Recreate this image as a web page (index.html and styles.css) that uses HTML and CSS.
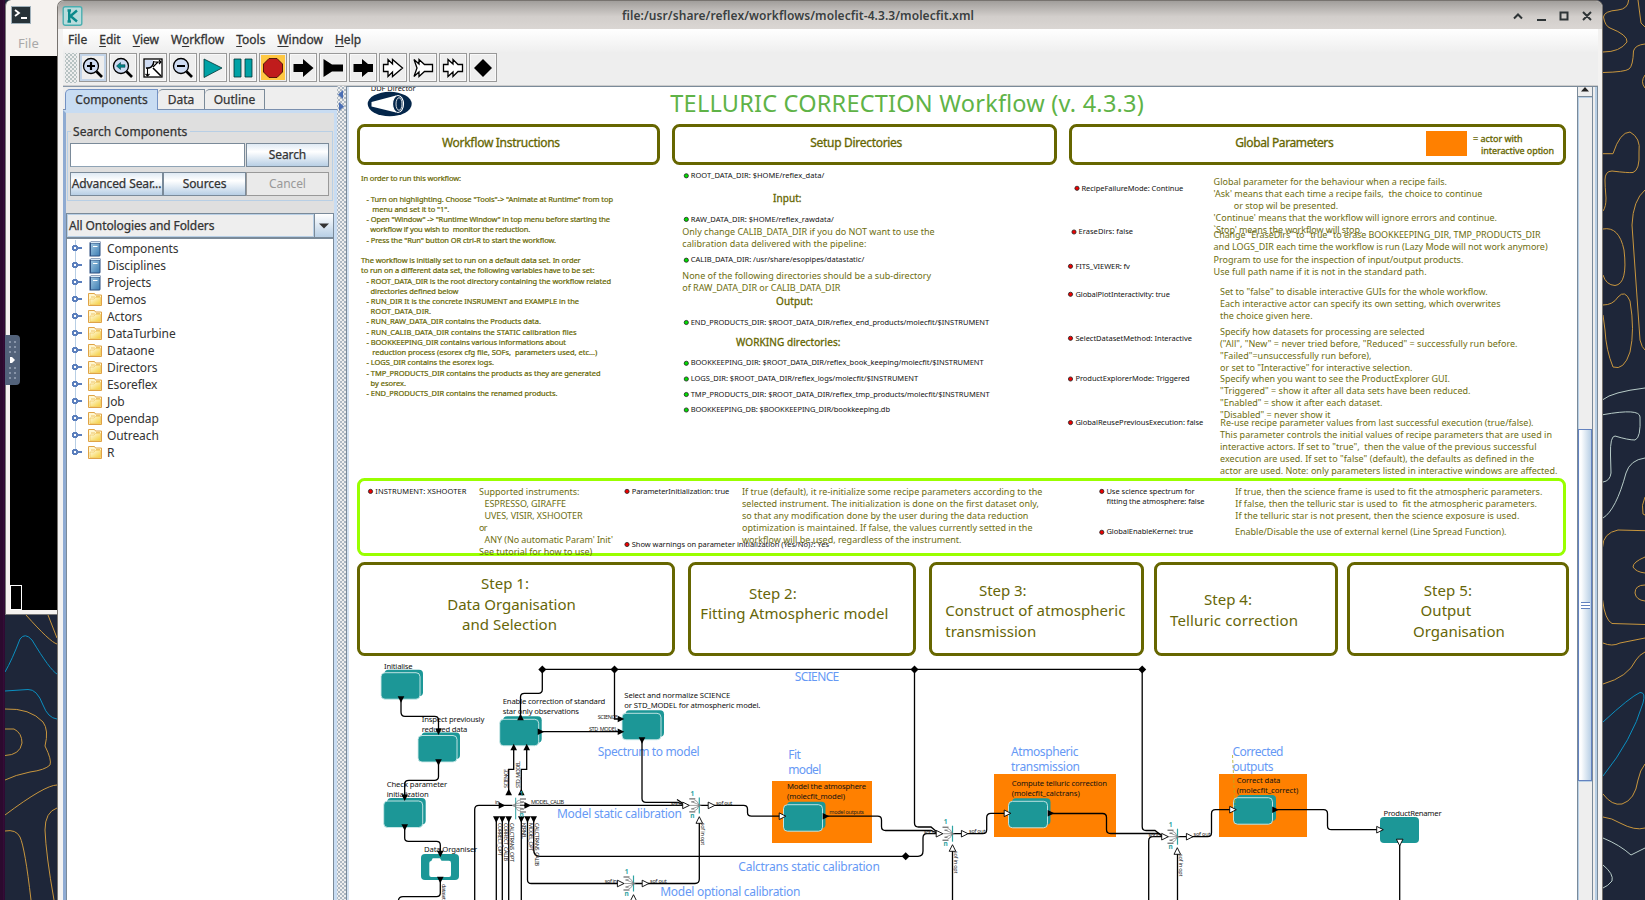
FILE: index.html
```
<!DOCTYPE html>
<html lang="en">
<head>
<meta charset="utf-8">
<title>molecfit.xml</title>
<link rel="stylesheet" href="styles.css">
</head>
<body>
<svg class="defs" width="0" height="0">
  <defs>
    <linearGradient id="bk" x1="0" y1="0" x2="1" y2="1"><stop offset="0" stop-color="#9cc4e0"/><stop offset="1" stop-color="#3f7fb4"/></linearGradient>
    <linearGradient id="fo" x1="0" y1="0" x2="1" y2="1"><stop offset="0" stop-color="#fffbe6"/><stop offset="1" stop-color="#f5cf3c"/></linearGradient>
    <symbol id="book" viewBox="0 0 14 16"><path d="M1.5 1.5L3 .5H12.5V14.5L11.5 15.5H1.5Z" fill="#2c4f80"/><rect x="3" y="2.5" width="8.5" height="12" fill="url(#bk)"/><path d="M2.5 1.5H12" stroke="#dbe9f5"/><path d="M5 5.5H9.500" stroke="#fff"/></symbol>
    <symbol id="folder" viewBox="0 0 14 13"><path d="M.5 12.500V.5H6.500L7.500 2H13.500V12.500Z" fill="#fff6cf" stroke="#dfa347"/><path d="M2 11.500V6H6L7.500 4.500H12.500V11.500Z" fill="url(#fo)" stroke="#eec14a" stroke-width=".6"/><path d="M3 4H7M8 3.500H12" stroke="#e8b84a" stroke-width=".8"/></symbol>
    <symbol id="lens" viewBox="0 0 24 24"><circle cx="10" cy="10" r="7.500" fill="#cfdcf3" stroke="#000" stroke-width="1.300"/><path d="M15.500 15.500L21 21" stroke="#000" stroke-width="2.600"/></symbol>
    <g id="tri"><path d="M-3.300 -3.300L3.300 0L-3.300 3.300Z"/></g>
    <g id="dia"><path d="M-4 0L0 -4L4 0L0 4Z"/></g>
    <g id="actor"><rect x="3.500" y="-3" width="38.500" height="26.500" rx="4"/><rect x="0" y="0" width="39" height="26.500" rx="4" stroke="#cfeaea" stroke-width=".9"/></g>
    <g id="merge">
      <path d="M0 -8V8" stroke="#2ea3a3" stroke-width="1.200"/>
      <path d="M-10 -6.500H-4M-10 6.500H-4M-8 -3.500H-5M-8 3.500H-5" stroke="#333" stroke-width=".9"/>
      <path d="M-5 -5.500Q-2 -5 0 0Q-2 5 -5 5.500M-6 -3Q-3 -2 1 0Q-3 2 -6 3M-10 0H2" stroke="#777" stroke-width=".7" fill="none"/>
      <text class="port" x="-7" y="-9.500">1</text><text class="port" x="-7" y="12.500">n</text>
    </g>
  </defs>
</svg>

<svg class="wallpaper" viewBox="0 0 1645 900">
  <g class="gold">
    <path d="M1628.700 0Q1628 9 1618 10Q1604 11 1603.500 17Q1605 26 1610 28Q1628 35 1627 42Q1620 52 1603 52M1603 72.500Q1625 72 1629 69Q1633 66 1633.500 51Q1635 45 1645 44M1638 0L1641 23L1645 27M1645 75Q1640 82 1645 88"/>
    <path d="M1603 153.700H1613Q1620 132 1630 132Q1641 138 1639 152Q1640 170 1633 172.500Q1628 173 1612 171Q1605 171 1605 180Q1605 186 1606 198Q1606 207 1603 211M1645 190Q1633 200 1632 225L1640 340Q1642 348 1645 350M1603 229Q1619 226 1624 250Q1628 284 1615 285.500Q1606 285 1603 275M1603 305Q1613 305 1618 297Q1625 289 1630 301Q1635 330 1630 352Q1624 371 1613 367Q1606 350 1605 330L1603 315"/>
    <path d="M1645 497Q1641 505 1643 514L1645 515M1645 530.700L1618 530Q1603 533 1602.600 547M1602.600 600Q1605 620 1612 623.500L1645 624.500M1645 557Q1633 562 1633 567Q1636 572 1645 573M1645 585Q1635 585 1635 593Q1636 600 1645 601M1603 643Q1612 647 1620 643L1645 638M1603 684Q1628 677 1636 660Q1639 655 1645 652M1603 794Q1612 806 1622 804Q1635 800 1638 780Q1640 770 1645 764M1603 817Q1612 818 1620 823Q1635 831 1645 828"/>
    <path d="M26 615Q50 642 57 644M48 615L57 638M5 709Q30 708 43 722Q49 730 45 746Q52 760 50 765Q45 770 30 772Q15 775 5 780M5 729H14Q22 733 22 743Q20 755 5 755.500M5 815Q45 785 57 785M5 831Q16 829 20 837Q25 848 31 900M57 808Q45 812 45 830Q46 855 54 900"/>
  </g>
  <path class="cyan" d="M1603 722Q1630 697 1640 692.500Q1646 692 1643 703Q1632 740 1603 776M5 672Q12 660 20 639Q25 632 32 640Q50 670 57 674M5 691L28 689.500Q37 689 43 705Q48 718 57 719"/>
  <path class="pale" d="M1603 399.600Q1612 392 1645 388M1603 414.700Q1640 408 1640 417Q1641 438 1635 440Q1628 440 1615 436Q1610 436 1610.500 455L1611 473Q1610 481 1603 482M1645 458Q1630 460 1626 473Q1616 510 1603 518M1603 838Q1620 845 1631 855L1645 848M1603 865Q1614 874 1612 881Q1608 886 1603 888"/>
</svg>
<div class="dock"></div>

<div class="terminal">
  <svg class="term-icon" viewBox="0 0 20 18"><rect x=".5" y=".5" width="19" height="17" fill="#263238" stroke="#9fb0ba"/><path d="M4 4L8 7L4 10M10 12H16" fill="none" stroke="#fff" stroke-width="1.800"/></svg>
  <div class="term-menu">File</div>
  <div class="term-screen"><div class="cursor"></div></div>
</div>
<div class="handle"><svg width="15" height="50"><path d="M4 7h9M4 12h9M4 17h9M4 33h9M4 38h9M4 43h9" stroke="#8794a8" stroke-width="2" stroke-dasharray="2 3"/><path d="M5 22V28H7L10 25L7 22Z" fill="#fff"/></svg></div>

<div class="window">
  <div class="titlebar">
    <svg class="k-icon" viewBox="0 0 20 20"><rect x=".7" y=".7" width="18.600" height="18.600" rx="2" fill="#b9dcdc" stroke="#4aaeb0" stroke-width="1.400"/><path d="M5 4.500H8.500M6.700 4.500V15.500M5 15.500H8.500M14.500 4.500L8 10L14.500 15.500" fill="none" stroke="#0c8a8c" stroke-width="2.400"/></svg>
    <span class="title">file:/usr/share/reflex/workflows/molecfit-4.3.3/molecfit.xml</span>
    <svg class="wm" viewBox="0 0 80 10"><g fill="none" stroke="#2e3436" stroke-width="2"><path d="M1 7.500L5 3.500L9 7.500M24 9H33M47.500 1.500H54.500V8.500H47.500ZM70 1L78 9M78 1L70 9"/></g></svg>
  </div>
  <div class="body">
    <div class="menubar"><span>File</span><span><u>E</u>dit</span><span><u>V</u>iew</span><span>W<u>o</u>rkflow</span><span><u>T</u>ools</span><span><u>W</u>indow</span><span><u>H</u>elp</span></div>
    <div class="toolbar">
      <i class="grip"></i>
      <b class="on"><svg viewBox="0 0 24 24"><use href="#lens"/><path d="M6 10H14M10 6V14" stroke="#000" stroke-width="2.200"/></svg></b>
      <b><svg viewBox="0 0 24 24"><use href="#lens"/><path d="M5.500 10L9.500 6.500V8.700H14V11.300H9.500V13.500Z" fill="#00858a" stroke="#033" stroke-width=".5"/></svg></b>
      <b><svg viewBox="0 0 24 24"><rect x="3" y="3" width="18" height="18" fill="#fff" stroke="#000" stroke-width="1.300"/><path d="M4 4H12V8Q12 12 8 12H4Z" fill="#cfdcf3"/><path d="M5 12Q12 13 13 5M12 12L20 20" stroke="#000" stroke-width="1.600" fill="none"/><path d="M12 11L17 6M14 6H20M18 4L20 6L18 8M6.500 13V20M4.500 18L6.500 20L8.500 18" fill="none" stroke="#000" stroke-width="1.100"/></svg></b>
      <b><svg viewBox="0 0 24 24"><use href="#lens"/><path d="M6 10H14" stroke="#000" stroke-width="2.200"/></svg></b>
      <b><svg viewBox="0 0 24 24"><path d="M3 3L21 12L3 21.500Z" fill="#00a2a6" stroke="#033" stroke-width=".8"/></svg></b>
      <b><svg viewBox="0 0 24 24"><path d="M3 3H10V21H3ZM14 3H21V21H14Z" fill="#00a2a6" stroke="#033" stroke-width=".8"/></svg></b>
      <b class="stop"><svg viewBox="0 0 24 24"><path d="M8 2.500H16L21.500 8V16L16 21.500H8L2.500 16V8Z" fill="#c01c1c" stroke="#300" stroke-width=".8"/></svg></b>
      <b><svg viewBox="0 0 24 24"><path d="M2.500 8H12V3L22.500 12L12 21V16H2.500Z"/></svg></b>
      <b><svg viewBox="0 0 24 24"><path d="M2.500 3L11 8.500H22V15.500H11L2.500 21Z"/></svg></b>
      <b><svg viewBox="0 0 24 24"><path d="M2.500 8H11V3L17 8H22V16H17L11 21V16H2.500Z"/></svg></b>
      <b><svg viewBox="0 0 24 24"><path class="hollow" d="M2.500 8.500H7V3.500L11.500 8V3.500L21.500 12L11.500 20.500V16L7 20.500V15.500H2.500Z"/></svg></b>
      <b><svg viewBox="0 0 24 24"><path class="hollow" d="M3 3.500L8 8V3.500L13.500 8.500H21.500V15.500H13.500L8 20.500V16L3 20.500L6 12Z"/></svg></b>
      <b><svg viewBox="0 0 24 24"><path class="hollow" d="M2.500 8.500H7V3.500L12 8V3.500L17 8.500H21.500V15.500H17L12 20.500V16L7 20.500V15.500H2.500Z"/></svg></b>
      <b><svg viewBox="0 0 24 24"><path d="M12 3L21 12L12 21L3 12Z"/></svg></b>
    </div>
    <div class="split">
      <div class="side">
        <div class="tabs"><span class="tab sel">Components</span><span class="tab data">Data</span><span class="tab out">Outline</span></div>
        <div class="panel">
          <div class="search">
            <div class="legend"><span>Search Components</span></div>
            <div class="row"><div class="input"></div><div class="btn">Search</div></div>
            <div class="row three"><div class="btn adv">Advanced Sear...</div><div class="btn">Sources</div><div class="btn off">Cancel</div></div>
          </div>
          <div class="combo"><span>All Ontologies and Folders</span><i><svg width="12" height="6"><path d="M1 .5H11L6 5.500Z" fill="#333"/></svg></i></div>
          <div class="tree">
            <div class="node bk"><i></i><svg><use href="#book"/></svg>Components</div>
            <div class="node bk"><i></i><svg><use href="#book"/></svg>Disciplines</div>
            <div class="node bk"><i></i><svg><use href="#book"/></svg>Projects</div>
            <div class="node"><i></i><svg><use href="#folder"/></svg>Demos</div>
            <div class="node"><i></i><svg><use href="#folder"/></svg>Actors</div>
            <div class="node"><i></i><svg><use href="#folder"/></svg>DataTurbine</div>
            <div class="node"><i></i><svg><use href="#folder"/></svg>Dataone</div>
            <div class="node"><i></i><svg><use href="#folder"/></svg>Directors</div>
            <div class="node"><i></i><svg><use href="#folder"/></svg>Esoreflex</div>
            <div class="node"><i></i><svg><use href="#folder"/></svg>Job</div>
            <div class="node"><i></i><svg><use href="#folder"/></svg>Opendap</div>
            <div class="node"><i></i><svg><use href="#folder"/></svg>Outreach</div>
            <div class="node last"><i></i><svg><use href="#folder"/></svg>R</div>
          </div>
        </div>
      </div>
      <div class="divider"><svg width="9" height="32"><path d="M6 4V13L1 8.500ZM2 16V25L7 20.500Z" fill="#4a6fb5"/></svg></div>
      <div class="canvas">
<svg viewBox="349 87 1228 813" width="1228" height="813">
  <text class="p" x="370.700" y="91" textLength="45">DDF Director</text>
  <ellipse cx="389.700" cy="104" rx="22" ry="12.300" fill="#04264a"/>
  <path d="M371.500 102L396 95.500V112.500L371.500 106.500Z" fill="#fff"/><ellipse cx="398" cy="104" rx="5.500" ry="8.500" fill="#04264a" stroke="#fff" stroke-width="1.200"/><ellipse cx="399" cy="104" rx="3" ry="6.300" fill="#04264a" stroke="#fff" stroke-width=".8"/>
  <text class="big" x="670.300" y="112.300" textLength="473.500">TELLURIC CORRECTION Workflow (v. 4.3.3)</text>
  <g class="box">
    <rect x="358.500" y="125.500" width="300" height="38" rx="6"/><rect x="673.500" y="125.500" width="382" height="38" rx="6"/><rect x="1070.500" y="125.500" width="494" height="38" rx="6"/>
    <rect x="358.500" y="563.500" width="315" height="91" rx="6"/><rect x="689.500" y="563.500" width="225" height="91" rx="6"/><rect x="930.500" y="563.500" width="212" height="91" rx="6"/><rect x="1155.500" y="563.500" width="181" height="91" rx="6"/><rect x="1348.500" y="563.500" width="219" height="91" rx="6"/>
  </g>
  <rect x="1426" y="131" width="41" height="25" fill="#ff8000"/>
  <g class="h12"><text x="442" y="146.700" textLength="118">Workflow Instructions</text><text x="810.300" y="146.700" textLength="92">Setup Directories</text><text x="1235.200" y="146.700" textLength="98.500">Global Parameters</text></g>
  <g class="h9"><text x="1473" y="141.700" textLength="49.500">= actor with</text><text x="1481" y="153.700" textLength="73">interactive option</text></g>
  <g class="ins">
    <text x="361" y="181.300" textLength="100">In order to run this workflow:</text>
    <text x="366.500" y="201.700" textLength="246.500">- Turn on highlighting. Choose "Tools"-&gt; "Animate at Runtime" from top</text>
    <text x="372.300" y="212" textLength="77">menu and set it to "1".</text>
    <text x="366.500" y="222.200" textLength="243.500">- Open "Window" -&gt; "Runtime Window" in top menu before starting the</text>
    <text x="370.300" y="232.400" textLength="160">workflow if you wish to&#160; monitor the reduction.</text>
    <text x="366.500" y="242.600" textLength="189.500">- Press the "Run" button OR ctrl-R to start the workflow.</text>
    <text x="361" y="263.100" textLength="219.700">The workflow is initially set to run on a default data set. In order</text>
    <text x="361" y="273.300" textLength="233.500">to run on a different data set, the following variables have to be set:</text>
    <text x="366.500" y="283.500" textLength="244.500">- ROOT_DATA_DIR is the root directory containing the workflow related</text>
    <text x="370.500" y="293.700" textLength="88">directories defined below</text>
    <text x="366.500" y="303.900" textLength="212.500">- RUN_DIR It is the concrete INSRUMENT and EXAMPLE in the</text>
    <text x="370.500" y="314.200" textLength="60.500">ROOT_DATA_DIR.</text>
    <text x="366.500" y="324.400" textLength="174.500">- RUN_RAW_DATA_DIR contains the Products data.</text>
    <text x="366.500" y="334.600" textLength="210">- RUN_CALIB_DATA_DIR contains the STATIC calibration files</text>
    <text x="366.500" y="344.800" textLength="199.500">- BOOKKEEPING_DIR contains various informations about</text>
    <text x="372.300" y="355" textLength="225">reduction process (esorex cfg file, SOFs,&#160; parameters used, etc...)</text>
    <text x="366.500" y="365.300" textLength="127.500">- LOGS_DIR contains the esorex logs.</text>
    <text x="366.500" y="375.500" textLength="234">- TMP_PRODUCTS_DIR contains the products as they are generated</text>
    <text x="370.500" y="385.700" textLength="35.500">by esorex.</text>
    <text x="366.500" y="395.900" textLength="191">- END_PRODUCTS_DIR contains the renamed products.</text>
  </g>
  <g class="gdot"><circle cx="686.300" cy="175.800" r="2.100"/><circle cx="686.300" cy="219.400" r="2.100"/><circle cx="686.300" cy="260.200" r="2.100"/><circle cx="686.300" cy="322.500" r="2.100"/><circle cx="686.300" cy="363.300" r="2.100"/><circle cx="686.300" cy="379" r="2.100"/><circle cx="686.300" cy="394.500" r="2.100"/><circle cx="686.300" cy="410" r="2.100"/></g>
  <g class="p">
    <text x="690.700" y="178" textLength="133.500">ROOT_DATA_DIR: $HOME/reflex_data/</text>
    <text x="690.700" y="221.700" textLength="143">RAW_DATA_DIR: $HOME/reflex_rawdata/</text>
    <text x="690.700" y="262.300" textLength="173.500">CALIB_DATA_DIR: /usr/share/esopipes/datastatic/</text>
    <text x="690.700" y="324.700" textLength="298.500">END_PRODUCTS_DIR: $ROOT_DATA_DIR/reflex_end_products/molecfit/$INSTRUMENT</text>
    <text x="690.700" y="365.300" textLength="293">BOOKKEEPING_DIR: $ROOT_DATA_DIR/reflex_book_keeping/molecfit/$INSTRUMENT</text>
    <text x="690.700" y="381" textLength="227.500">LOGS_DIR: $ROOT_DATA_DIR/reflex_logs/molecfit/$INSTRUMENT</text>
    <text x="690.700" y="396.700" textLength="299">TMP_PRODUCTS_DIR: $ROOT_DATA_DIR/reflex_tmp_products/molecfit/$INSTRUMENT</text>
    <text x="690.700" y="412.300" textLength="199.300">BOOKKEEPING_DB: $BOOKKEEPING_DIR/bookkeeping.db</text>
  </g>
  <g class="h10"><text x="773" y="201.500" textLength="28.500">Input:</text><text x="776" y="304.700" textLength="37">Output:</text><text x="736" y="345.700" textLength="104.500">WORKING directories:</text></g>
  <g class="note">
    <text x="682.300" y="235.300" textLength="252.300">Only change CALIB_DATA_DIR if you do NOT want to use the</text>
    <text x="682.300" y="247.300" textLength="184">calibration data delivered with the pipeline:</text>
    <text x="682.300" y="279" textLength="248.700">None of the following directories should be a sub-directory</text>
    <text x="682.300" y="291" textLength="158">of RAW_DATA_DIR or CALIB_DATA_DIR</text>
    <text x="1213.600" y="185.300" textLength="233.400">Global parameter for the behaviour when a recipe fails.</text>
    <text x="1213.600" y="197.300" textLength="268.700">'Ask' means that each time a recipe fails,&#160; the choice to continue</text>
    <text x="1233.700" y="209.300" textLength="104.500">or stop wil be presented.</text>
    <text x="1213.600" y="221.200" textLength="283.400">'Continue' means that the workflow will ignore errors and continue.</text>
    <text x="1213.600" y="233.200" textLength="148.700">`Stop' means the workflow will stop.</text>
    <text x="1213.600" y="238.300" textLength="327">Change "EraseDirs" to "true" to erase BOOKKEEPING_DIR, TMP_PRODUCTS_DIR</text>
    <text x="1213.600" y="250.300" textLength="334">and LOGS_DIR each time the workflow is run (Lazy Mode will not work anymore)</text>
    <text x="1213.600" y="263.300" textLength="249.700">Program to use for the inspection of input/output products.</text>
    <text x="1213.600" y="275.300" textLength="213">Use full path name if it is not in the standard path.</text>
    <text x="1220" y="294.700" textLength="267.600">Set to "false" to disable interactive GUIs for the whole workflow.</text>
    <text x="1220" y="306.700" textLength="280.500">Each interactive actor can specify its own setting, which overwrites</text>
    <text x="1220" y="318.600" textLength="92.600">the choice given here.</text>
    <text x="1220" y="335" textLength="204.600">Specify how datasets for processing are selected</text>
    <text x="1220" y="347" textLength="297.500">("All", "New" = never tried before, "Reduced" = successfully run before.</text>
    <text x="1220" y="359" textLength="151.400">"Failed"=unsuccessfully run before),</text>
    <text x="1220" y="371" textLength="192.400">or set to "Interactive" for interactive selection.</text>
    <text x="1220" y="382" textLength="230">Specify when you want to see the ProductExplorer GUI.</text>
    <text x="1220" y="394" textLength="250.500">"Triggered" = show it after all data sets have been reduced.</text>
    <text x="1220" y="406" textLength="162.400">"Enabled" = show it after each dataset.</text>
    <text x="1220" y="418" textLength="110.500">"Disabled" = never show it</text>
    <text x="1220.300" y="425.900" textLength="313.200">Re-use recipe parameter values from last successful execution (true/false).</text>
    <text x="1220" y="437.900" textLength="332">This parameter controls the initial values of recipe parameters that are used in</text>
    <text x="1220" y="449.800" textLength="316.500">interactive actors. If set to "true",&#160; then the value of the previous successful</text>
    <text x="1220" y="461.800" textLength="314">execution are used. If set to "false" (default), the defaults as defined in the</text>
    <text x="1220" y="473.700" textLength="337.400">actor are used. Note: only parameters listed in interactive windows are affected.</text>
  </g>
  <rect x="358.500" y="479.500" width="1206" height="75" rx="6" fill="none" stroke="#99ff00" stroke-width="3"/>
  <g class="note">
    <text x="479" y="495.200" textLength="100.500">Supported instruments:</text>
    <text x="484.500" y="507.200" textLength="81.500">ESPRESSO, GIRAFFE</text>
    <text x="484.500" y="519" textLength="98">UVES, VISIR, XSHOOTER</text>
    <text x="479" y="531" textLength="8.500">or</text>
    <text x="484.500" y="542.900" textLength="128.500">ANY (No automatic Param' Init'</text>
    <text x="479" y="554.500" textLength="113.300">See tutorial for how to use)</text>
    <text x="742" y="495.200" textLength="300.300">If true (default), it re-initialize some recipe parameters according to the</text>
    <text x="742" y="507.200" textLength="297">selected instrument. The initialization is done on the first dataset only,</text>
    <text x="742" y="519" textLength="286.400">so that any modification done by the user during the data reduction</text>
    <text x="742" y="531" textLength="290.500">optimization is maintained. If false, the values currently setted in the</text>
    <text x="742" y="542.900" textLength="219.500">workflow will be used, regardless of the instrument.</text>
    <text x="1235.300" y="495.200" textLength="307">If true, then the science frame is used to fit the atmospheric parameters.</text>
    <text x="1235.300" y="507.200" textLength="301.700">If false, then the telluric star is used to&#160; fit the atmospheric parameters.</text>
    <text x="1235.300" y="519" textLength="284">If the telluric star is not present, then the science exposure is used.</text>
    <text x="1235" y="535.300" textLength="271.500">Enable/Disable the use of external kernel (Line Spread Function).</text>
  </g>
  <g class="rdot"><circle cx="1077" cy="188.300" r="2.100"/><circle cx="1074" cy="232" r="2.100"/><circle cx="1070.500" cy="266.300" r="2.100"/><circle cx="1070.500" cy="294.300" r="2.100"/><circle cx="1070.500" cy="338.300" r="2.100"/><circle cx="1070.500" cy="379" r="2.100"/><circle cx="1070.500" cy="422.600" r="2.100"/><circle cx="370.500" cy="491.400" r="2.100"/><circle cx="627" cy="491.400" r="2.100"/><circle cx="627" cy="544.500" r="2.100"/><circle cx="1101.800" cy="491.400" r="2.100"/><circle cx="1101.800" cy="532.300" r="2.100"/></g>
  <g class="p">
    <text x="1081.500" y="190.700" textLength="101.700">RecipeFailureMode: Continue</text>
    <text x="1078.500" y="234.200" textLength="54.500">EraseDirs: false</text>
    <text x="1075.400" y="268.700" textLength="54.500">FITS_VIEWER: fv</text>
    <text x="1075.400" y="296.700" textLength="94.500">GlobalPlotInteractivity: true</text>
    <text x="1075.400" y="340.700" textLength="116.500">SelectDatasetMethod: Interactive</text>
    <text x="1075.400" y="381.200" textLength="114.300">ProductExplorerMode: Triggered</text>
    <text x="1075.400" y="425" textLength="127.900">GlobalReusePreviousExecution: false</text>
    <text x="375.300" y="493.700" textLength="91">INSTRUMENT: XSHOOTER</text>
    <text x="631.700" y="493.700" textLength="97.600">ParameterInitialization: true</text>
    <text x="631.700" y="546.800" textLength="197.300">Show warnings on parameter initialization (Yes/No)?: Yes</text>
    <text x="1106.400" y="493.700" textLength="88.300">Use science spectrum for</text>
    <text x="1106.400" y="504" textLength="98">fitting the atmosphere: false</text>
    <text x="1106.400" y="534.300" textLength="86.800">GlobalEnableKernel: true</text>
  </g>
  <g class="step">
    <text x="481" y="589.300" textLength="48">Step 1:</text><text x="447.300" y="609.700" textLength="128.400">Data Organisation</text><text x="462" y="630.200" textLength="95">and Selection</text>
    <text x="749" y="599" textLength="47.700">Step 2:</text><text x="700.300" y="619.300" textLength="188">Fitting Atmospheric model</text>
    <text x="979" y="596" textLength="47.500">Step 3:</text><text x="945.200" y="616.300" textLength="180.300">Construct of atmospheric</text><text x="945.200" y="636.700" textLength="91">transmission</text>
    <text x="1204" y="605.200" textLength="48">Step 4:</text><text x="1170" y="625.500" textLength="128">Telluric correction</text>
    <text x="1423.700" y="596" textLength="48.300">Step 5:</text><text x="1420.600" y="616.300" textLength="50.500">Output</text><text x="1413" y="636.700" textLength="91.800">Organisation</text>
  </g>

  <g fill="#ff8000"><rect x="772" y="781" width="100" height="62"/><rect x="994" y="774" width="122" height="63"/><rect x="1219" y="774" width="88" height="63"/></g>
  <g class="blue">
    <text x="794.700" y="680.500" textLength="44.600">SCIENCE</text><text x="597.700" y="755.900" textLength="102">Spectrum to model</text><text x="557" y="818.300" textLength="125">Model static calibration</text>
    <text x="738.300" y="871.300" textLength="141.500">Calctrans static calibration</text><text x="660.300" y="896.300" textLength="140">Model optional calibration</text>
    <text x="788.300" y="758.700" textLength="12.500">Fit</text><text x="788.300" y="774" textLength="33">model</text>
    <text x="1011" y="755.900" textLength="67.500">Atmospheric</text><text x="1011" y="771.200" textLength="69">transmission</text>
    <text x="1232.500" y="755.900" textLength="51">Corrected</text><text x="1232.500" y="771.200" textLength="41">outputs</text>
  </g>
  <g class="lab">
    <text x="384" y="669" textLength="28.700">Initialise</text>
    <text x="421.700" y="721.700" textLength="62.600">Inspect previously</text><text x="421.700" y="731.700" textLength="45.600">reduced data</text>
    <text x="386.700" y="787.300" textLength="60.600">Check parameter</text><text x="386.700" y="797.300" textLength="42">initialization</text>
    <text x="424" y="852" textLength="53.300">Data Organiser</text>
    <text x="502.700" y="704.300" textLength="102.600">Enable correction of standard</text><text x="502.700" y="714.300" textLength="76.300">star only observations</text>
    <text x="624.300" y="698" textLength="106">Select and normalize SCIENCE</text><text x="624.300" y="708" textLength="136">or STD_MODEL for atmospheric model.</text>
    <text x="787" y="789.300" textLength="79">Model the atmosphere</text><text x="787" y="799.300" textLength="58">(molecfit_model)</text>
    <text x="1011.700" y="786" textLength="95.300">Compute telluric correction</text><text x="1011.700" y="796.200" textLength="68">(molecfit_calctrans)</text>
    <text x="1236.700" y="783" textLength="43.700">Correct data</text><text x="1236.700" y="793.200" textLength="61.500">(molecfit_correct)</text>
    <text x="1383.600" y="816" textLength="58">ProductRenamer</text>
  </g>
  <g fill="#1c9797">
    <use href="#actor" x="381" y="672.700"/><use href="#actor" x="418" y="735.500"/><use href="#actor" x="383.700" y="801"/>
    <use href="#actor" x="499.700" y="719.300"/><use href="#actor" x="622" y="713.300"/>
    <use href="#actor" x="783.500" y="804.700"/><use href="#actor" x="1008.500" y="801.300"/>
    <rect x="1237" y="795" width="39" height="26" rx="4"/><rect x="1233.500" y="797.700" width="39" height="26.500" rx="4" stroke="#cfeaea" stroke-width=".9"/>
    <rect x="421" y="854" width="38" height="26" rx="4"/><rect x="1380" y="817" width="39" height="26" rx="4"/>
  </g>
  <path d="M429.300 863Q429.300 861 431.300 861L432.700 858.300H440L441.500 860.700H449Q451 860.700 451 863V875Q451 877 449 877H431.300Q429.300 877 429.300 875Z" fill="#fff"/>
  <path d="M1232.500 755L1235 806" stroke="#b8b020" stroke-width=".8" stroke-dasharray="3 2" fill="none"/>
  <g class="wire">
    <path d="M401 699V712Q401 716.300 405 716.300H434.500Q438.500 716.300 438.500 720V732"/>
    <path d="M438.500 762V776.500Q438.500 780.300 434.500 780.300H409Q404.700 780.300 404.700 784V798"/>
    <path d="M404.700 827V838Q404.700 841.300 408.500 841.300H436.500Q440.300 841.300 440.300 845V855"/>
    <path d="M440.300 880V893Q440.300 896.700 436.500 896.700H403Q399 896.700 398.500 900"/>
    <path d="M520.500 717V697Q520.500 693.300 524.500 693.300H538.500Q542.300 693.300 542.300 689.500V669.300H1142.200"/>
    <path d="M614.500 669.300V719H622M539 731.700H622"/>
    <path d="M642 740V798.500Q642 802.300 646 802.300H678L685 805.500M677 799.500L683 803.500"/>
    <path d="M508.700 792V769.300H513.700V748M521.300 792V769.300H526.700V748"/>
    <path d="M474.700 900V809.500Q474.700 805.400 479 805.400H512M520 805.400H684"/>
    <path d="M496.300 820V900M502.300 820V900M508.700 820V900M521.300 820V900M527.500 820V880Q527.500 883.500 531.500 883.500H620"/>
    <path d="M533.700 820V850Q533.700 856.300 540 856.300H918Q923 856.300 923 851V838Q923 833.700 927 833.700H938"/>
    <path d="M648 883.500H695Q699.300 883.500 699.300 879V822"/>
    <path d="M700 805.400H708M714 805.400H743.500Q747.500 805.400 747.500 809V812.500Q747.500 816.200 751.500 816.200H781"/>
    <path d="M826 816.200H877.500Q881.500 816.200 881.500 820V826.500Q881.500 830.500 885.500 830.500H931L938 833.500"/>
    <path d="M914.500 669.300V823Q914.500 827 918.500 827H931L937 832"/>
    <path d="M952 833.700H961M968 833.700H982.500Q986.700 833.700 986.700 829.500V817.500Q986.700 813.300 991 813.300H1005M952.500 850V900"/>
    <path d="M1051 813.500H1102.500Q1106.500 813.500 1106.500 817.500V829.500Q1106.500 833.500 1110.500 833.500H1159L1163 836"/>
    <path d="M1142.200 669.300V826.500Q1142.200 830.500 1146 830.500H1155L1162 836"/>
    <path d="M1148.700 900V841Q1148.700 836.700 1153 836.700H1163M1177.500 853V900M1178 836.700H1186M1192 836.700H1207.500Q1211.500 836.700 1211.500 832.500V813.700Q1211.500 809.700 1215.500 809.700H1230"/>
    <path d="M1276 809.700H1323.500Q1327.500 809.700 1327.500 813.700V825.700Q1327.500 829.700 1331.500 829.700H1378M1399.700 845V900M634 883.500H642"/>
  </g>
  <g>
    <use href="#dia" x="542.300" y="669.500"/><use href="#dia" x="614.500" y="669.500"/><use href="#dia" x="914.500" y="669.500"/><use href="#dia" x="1142.200" y="669.500"/><use href="#dia" x="905.700" y="856.300"/>
    <use href="#tri" transform="translate(401 699.500) rotate(90)"/><use href="#tri" transform="translate(438.500 731.700) rotate(90)"/><use href="#tri" transform="translate(438.500 762.500) rotate(90)"/><use href="#tri" transform="translate(404.700 797.700) rotate(90)"/><use href="#tri" transform="translate(404.700 827.500) rotate(90)"/><use href="#tri" transform="translate(440.300 854) rotate(90)"/><use href="#tri" transform="translate(440.300 880) rotate(90)"/>
    <use href="#tri" transform="translate(520.500 717) rotate(-90)"/><use href="#tri" transform="translate(513.700 747) rotate(-90)"/><use href="#tri" transform="translate(526.700 747) rotate(-90)"/><use href="#tri" transform="translate(508.700 792) rotate(-90)"/><use href="#tri" transform="translate(521.300 792) rotate(-90)"/>
    <use href="#tri" x="541" y="731.700"/><use href="#tri" x="621" y="731.700"/><use href="#tri" x="621" y="719"/><use href="#tri" transform="translate(642 740.500) rotate(90)"/>
    <use href="#tri" x="502" y="805.400"/><use href="#tri" x="527.700" y="805.400"/>
    <use href="#tri" transform="translate(496.300 819.500) rotate(90)"/><use href="#tri" transform="translate(502.300 819.500) rotate(90)"/><use href="#tri" transform="translate(508.700 819.500) rotate(90)"/><use href="#tri" transform="translate(521.300 819.500) rotate(90)"/><use href="#tri" transform="translate(527.500 819.500) rotate(90)"/><use href="#tri" transform="translate(533.700 819.500) rotate(90)"/>
    <use href="#tri" x="826" y="816.200"/><use href="#tri" x="1051" y="813.300"/><use href="#tri" x="1275.500" y="809.700"/>
  </g>
  <use href="#merge" x="699.300" y="805.400"/><use href="#merge" x="633.500" y="883.500"/><use href="#merge" x="952.500" y="833.700"/><use href="#merge" x="1177.500" y="836.700"/>
  <g fill="none">
    <path d="M515.700 797.700V819.300" stroke="#2ea3a3" stroke-width="1"/><path d="M520 799H526M520 812H526M520 802H524M520 809H524" stroke="#333" stroke-width=".9"/><path d="M521 800Q516 800 515 805.400Q516 811 521 811M523 802.500Q516 803 512 805.400Q516 808 523 808.500M512 805.400H524" stroke="#777" stroke-width=".7"/>
  </g>
  <text class="port" x="521.700" y="796">1</text><text class="port" x="521.700" y="817">n</text>
  <g class="open">
    <use href="#tri" x="686" y="805.400"/><use href="#tri" x="711.500" y="805.400"/><use href="#tri" transform="translate(699.300 820) rotate(-90)"/>
    <use href="#tri" x="620.700" y="883.500"/><use href="#tri" x="645.500" y="883.500"/><use href="#tri" transform="translate(633.500 898) rotate(-90)"/>
    <use href="#tri" x="782.500" y="816.200"/><use href="#tri" x="939.500" y="833.700"/><use href="#tri" x="964.700" y="833.700"/><use href="#tri" transform="translate(952.500 848) rotate(-90)"/>
    <use href="#tri" x="1007.500" y="813.300"/><use href="#tri" x="1165" y="836.700"/><use href="#tri" x="1189.700" y="836.700"/><use href="#tri" transform="translate(1177.300 851) rotate(-90)"/>
    <use href="#tri" x="1233" y="809.700"/><use href="#tri" x="1380" y="829.700"/><use href="#tri" transform="translate(1399.700 842.500) rotate(90)"/>
  </g>
  <g class="tiny">
    <text x="597.700" y="718.700" textLength="20">SCIENCE</text><text x="589" y="730.500" textLength="28.300">STD_MODEL</text>
    <text x="495" y="804.300" textLength="4.500">in</text><text x="531" y="804" textLength="33">MODEL_CALIB</text>
    <text x="671" y="806" textLength="12">sof in</text><text x="716" y="804.700" textLength="16.300">sof out</text>
    <text x="604.700" y="882.800" textLength="12.300">sof in</text><text x="650" y="882.800" textLength="16.700">sof out</text>
    <text x="829.300" y="814.300" textLength="34.700">model outputs</text><text x="924" y="833.500" textLength="12">sof in</text><text x="969" y="832.800" textLength="16.500">sof out</text>
    <text x="1148.500" y="836.500" textLength="12">sof in</text><text x="1193.500" y="835.800" textLength="17">sof out</text>
    <text transform="translate(508.300 788) rotate(-90)" textLength="19">SCIENCE</text><text transform="translate(520 788) rotate(-90)" textLength="27">STD_MODEL</text>
    <text transform="translate(497.500 823) rotate(90)" textLength="33">CORRECT_OPT</text><text transform="translate(503.800 823) rotate(90)" textLength="38">CORRECT_CALIB</text><text transform="translate(510 823) rotate(90)" textLength="39">CALCTRANS_OPT</text>
    <text transform="translate(522.300 823) rotate(90)" textLength="16">KERNEL</text><text transform="translate(528.600 823) rotate(90)" textLength="28">MODEL_OPT</text><text transform="translate(534.900 823) rotate(90)" textLength="43">CALCTRANS_CALIB</text>
    <text transform="translate(701 822.700) rotate(90)" textLength="22.500">sof in opt</text><text transform="translate(954 851) rotate(90)" textLength="22.500">sof in opt</text><text transform="translate(1179 854) rotate(90)" textLength="22.500">sof in opt</text>
    <text transform="translate(441.500 884) rotate(90)" textLength="16">dataset</text>
  </g>
</svg>
        <div class="scroll"><div class="up"><svg width="8" height="5"><path d="M4 0L8 4.500H0Z" fill="#222"/></svg></div><div class="track"></div><div class="thumb"><i></i></div><div class="track rest"></div></div>
      </div>
    </div>
  </div>
</div>
</body>
</html>
```
FILE: styles.css
```
* { box-sizing: border-box; }
body { margin: 0; width: 1645px; height: 900px; overflow: hidden; position: relative; background: #1e2639; font-family: "Noto Sans", sans-serif; font-size: 12px; color: #333; }
.defs { position: absolute; }
.wallpaper { position: absolute; left: 0; top: 0; width: 1645px; height: 900px; fill: none; stroke-width: 1; }
.gold { stroke: #c8963e; }
.cyan { stroke: #0b8fc0; }
.pale { stroke: #b8ccc8; }
.dock { position: absolute; left: 0; top: 0; width: 5px; height: 900px; background: linear-gradient(90deg, #2c0a2e 0 3px, #3d0d40 4px, #200822); }

.terminal { position: absolute; left: 5px; top: 0; width: 60px; height: 615px; background: #f5f2ef; border: 1px solid #777; border-top: 0; border-radius: 6px 0 0 0; padding: 6px 0 4px 4px; display: flex; flex-direction: column; }
.term-icon { width: 20px; height: 18px; margin-left: 1px; }
.term-menu { height: 32px; padding: 11px 0 0 8px; line-height: 16px; font-size: 13px; color: #a9a9a9; }
.term-screen { flex: 1; background: #000; display: flex; align-items: flex-end; }
.cursor { width: 12px; height: 25px; border: 1px solid #fff; }
.handle { position: absolute; left: 5px; top: 335px; width: 15px; height: 50px; background: #52627a; border-radius: 0 4px 4px 0; }
.handle svg { display: block; }

.window { position: absolute; left: 57px; top: 0; width: 1546px; height: 901px; border: 1px solid #77736f; border-bottom: 0; border-radius: 7px 7px 0 0; background: #f3f2f1; overflow: hidden; display: flex; flex-direction: column; }
.titlebar { height: 28px; flex: none; background: linear-gradient(#a19e9b, #d2cecb 55%, #dad6d3); display: flex; align-items: center; padding: 2px 9px 0 4px; }
.k-icon { width: 21px; height: 20px; }
.title { flex: 1; text-align: center; font-size: 12px; font-weight: 600; color: #3a3f41; line-height: 18px; letter-spacing: .07px; }
.wm { width: 80px; height: 10px; }
.body { flex: 1; margin: 0 4px 0 5px; background: #eee; display: flex; flex-direction: column; }
.menubar { height: 23px; flex: none; display: flex; align-items: flex-start; padding: 3px 0 0 5px; gap: 12px; line-height: 16px; font-size: 12px; -webkit-text-stroke: .3px #333; background: linear-gradient(#fff, #efefef); }
.menubar u { text-underline-offset: 2px; text-decoration-thickness: 1px; }
.toolbar { height: 34px; flex: none; display: flex; align-items: flex-start; padding: 1px 0 0 2px; gap: 2px; border-bottom: 1px solid #ccc; }
.toolbar b { width: 28px; height: 29px; border: 1px solid #999; box-shadow: inset 0 0 0 1px #f8f8f8; display: flex; align-items: center; justify-content: center; }
.toolbar b svg { width: 24px; height: 24px; }
.toolbar .on { box-shadow: inset 0 0 0 2px #c3d4e8; }
.toolbar .stop { background: #ffc843; box-shadow: inset 0 0 0 1px #eee; }
.toolbar .grip { width: 12px; height: 30px; background: radial-gradient(circle, #9aa 0 .6px, transparent .9px) 0 0 / 4px 4px, radial-gradient(circle, #9aa 0 .6px, transparent .9px) 2px 2px / 4px 4px; }
.hollow { fill: #fff; stroke: #000; stroke-width: 1.300; }

.split { flex: 1; display: flex; }
.side { width: 274px; display: flex; flex-direction: column; border-top: 1px solid #8898aa; }
.tabs { height: 23px; display: flex; align-items: flex-end; padding-left: 2px; -webkit-text-stroke: .25px #333; border-bottom: 1px solid #7a8fae; }
.tab { height: 20px; line-height: 20px; text-align: center; border: 1px solid #7a8a99; border-bottom: 0; border-left-width: 0; border-top-left-radius: 5px; }
.tab.sel { width: 93px; background: #c8dcf2; height: 21px; margin-bottom: -1px; border-color: #7392c4; border-left-width: 1px; }
.tab.data { width: 47px; }
.tab.out { width: 60px; }
.panel { flex: 1; background: #dfdfdf; border: solid #c8dcf2; border-width: 3px 3px 0 3px; border-left-color: #8fabd2; display: flex; flex-direction: column; }
.search { height: 70px; margin: 18px 1px 0 1px; border: 1px solid #b8cfe5; padding: 0 2px; }
.legend { height: 11px; padding-left: 1px; line-height: 12px; -webkit-text-stroke: .25px #333; }
.legend span { position: relative; top: -6px; background: #dfdfdf; padding: 0 3px 0 2px; letter-spacing: .05px; }
.row { display: flex; gap: 1px; height: 24px; margin-bottom: 5px; }
.row.three { gap: 0; }
.input { width: 175px; background: #fff; border: 1px solid #7a8a99; border-bottom-color: #8fa3b5; }
.btn { width: 83px; border: 1px solid #7a8a99; line-height: 21px; text-align: center; -webkit-text-stroke: .25px #333; letter-spacing: -.1px; background: linear-gradient(#dfeaf4, #fff 35%, #b8cfe5); flex: none; }
.btn.adv { width: 93px; }
.btn.off { background: #eaeaea; color: #999; -webkit-text-stroke: 0; border-color: #999; }
.combo { margin: 12px 0 0; height: 26px; border: 1px solid #7a8a99; border-bottom-width: 2px; display: flex; line-height: 22px; -webkit-text-stroke: .25px #333; }
.combo span { flex: 1; padding-left: 1px; border: 1px solid #b8cfe5; background: #eee; letter-spacing: -.1px; }
.combo i { width: 19px; border-left: 1px solid #7a8a99; background: linear-gradient(#fff, #b8cfe5); display: flex; align-items: center; justify-content: center; }
.tree { flex: 1; background: #fff; border-left: 1px solid #7a8a99; border-right: 1px solid #7a8a99; padding-top: 1px; font-size: 12px; }
.node { height: 17px; display: flex; align-items: center; padding-left: 5px; line-height: 17px; letter-spacing: -.1px; }
.node i { width: 12px; height: 17px; background: radial-gradient(circle at 3px 8px, #fff 0 1px, #5b7fbd 1.500px 3px, transparent 3.500px), linear-gradient(#5b7fbd, #5b7fbd) 5px 7px / 5px 2px no-repeat, linear-gradient(#b8cfe5, #b8cfe5) 2.500px 0 / 1px 100% no-repeat; }
.node.last i { background: radial-gradient(circle at 3px 8px, #fff 0 1px, #5b7fbd 1.500px 3px, transparent 3.500px), linear-gradient(#5b7fbd, #5b7fbd) 5px 7px / 5px 2px no-repeat, linear-gradient(#b8cfe5, #b8cfe5) 2.500px 0 / 1px 8px no-repeat; }
.node svg { width: 14px; height: 13px; margin: 0 5px 0 4px; }
.node.bk svg { width: 14px; height: 16px; }
.divider { width: 9px; background: radial-gradient(circle, #89a 0 .6px, transparent .9px) 0 0 / 4px 4px, radial-gradient(circle, #89a 0 .6px, transparent .9px) 2px 2px / 4px 4px, #eee; }
.divider svg { display: block; }
.canvas { flex: 1; display: flex; background: #fff; border: solid #7a8a99; border-width: 1px 0 0 1px; box-shadow: inset 2px 0 0 #d5e3f2; padding-left: 2px; }
.canvas > svg { display: block; flex: none; }

.scroll { width: 16px; flex: none; margin-right: auto; display: flex; flex-direction: column; background: #eee; border-left: 1px solid #7a8a99; border-right: 1px solid #7a8a99; box-shadow: 2px 0 0 #eee, 4px 0 0 #b8cfe5, 5px 0 0 #7a8a99; }
.up { height: 10px; border-bottom: 1px solid #7a8a99; display: flex; justify-content: center; }
.track { height: 332px; box-shadow: inset 1px 1px 0 #b8cfe5; }
.thumb { height: 352px; border: 1px solid #6382bf; background: linear-gradient(90deg, #f3f8fd, #fff 15%, #b8cfe5); display: flex; align-items: center; justify-content: center; }
.thumb i { width: 9px; height: 7px; background: repeating-linear-gradient(#6382bf 0 1px, #fff 1px 3px); }
.rest { flex: 1; }

text { white-space: pre; }
.p { font-size: 7.500px; fill: #111; }
.lab { font-size: 7.700px; fill: #111; }
.big { font-size: 23.500px; fill: #5fb347; }
.box { fill: none; stroke: #666600; stroke-width: 3; }
.h12 { font-size: 12px; fill: #666600; stroke: #666600; stroke-width: .3; }
.h10 { font-size: 10px; fill: #666600; stroke: #666600; stroke-width: .3; }
.h9 { font-size: 9px; fill: #666600; stroke: #666600; stroke-width: .3; }
.ins { font-size: 7.500px; fill: #666600; stroke: #666600; stroke-width: .2; }
.note { font-size: 9px; fill: #6e6e10; }
.step { font-size: 15px; fill: #666608; }
.blue { font-size: 12px; fill: #6699f5; }
.tiny { font-size: 5.500px; fill: #222; }
.port { font-size: 6.500px; font-weight: 700; fill: #2ea3a3; stroke: none; text-anchor: middle; }
.gdot { fill: #0d0; stroke: #222; stroke-width: .8; }
.rdot { fill: #e00; stroke: #222; stroke-width: .8; }
.wire { fill: none; stroke: #000; stroke-width: 1.300; }
.open { fill: #fff; stroke: #000; stroke-width: .9; }
```
